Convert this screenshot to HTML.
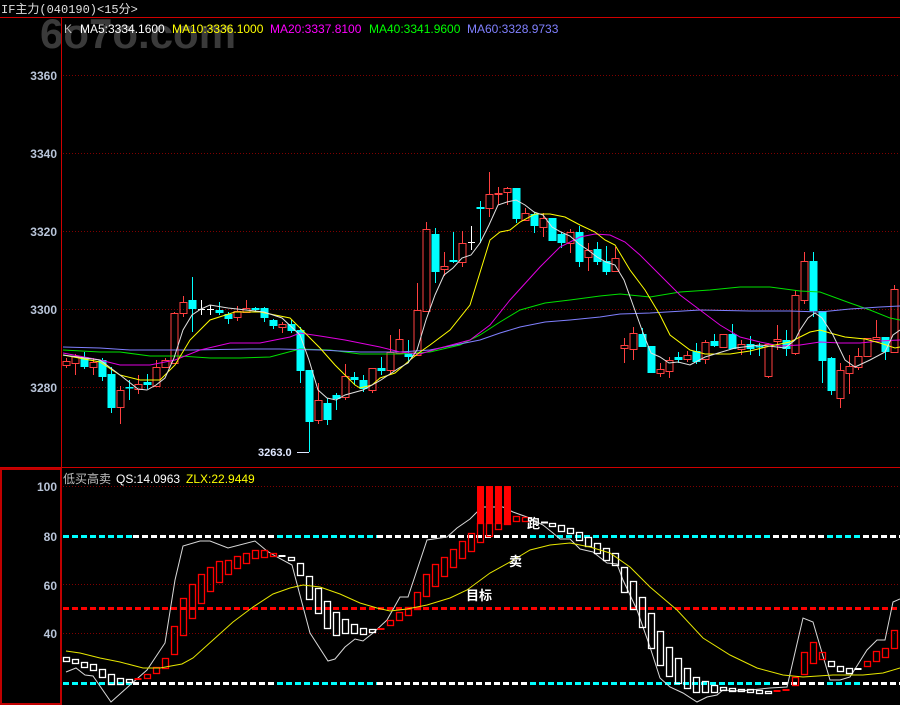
<!DOCTYPE html>
<html><head><meta charset="utf-8">
<style>
html,body{margin:0;padding:0;background:#000;width:900px;height:705px;overflow:hidden}
svg{display:block}
text{font-family:"Liberation Sans","Noto Sans CJK SC",sans-serif}
</style></head>
<body>
<svg id="s" width="900" height="705" xmlns="http://www.w3.org/2000/svg">
<rect width="900" height="705" fill="#000"/>
<text x="40" y="48" font-size="42" font-weight="bold" fill="#3a3a3a">6o7o.com</text>
<text x="1" y="13" font-size="12" fill="#e0e0e0" style="font-family:'Liberation Mono','Noto Sans CJK SC',monospace">IF主力(040190)&lt;15分&gt;</text>
<line x1="0" y1="17.5" x2="900" y2="17.5" stroke="#d00000"/>
<line x1="61.5" y1="17" x2="61.5" y2="467" stroke="#d00000"/>
<line x1="0" y1="467.5" x2="900" y2="467.5" stroke="#d00000"/>
<rect x="1" y="469" width="60" height="235" fill="none" stroke="#c00000" stroke-width="2"/>
<g font-size="12">
<text x="64" y="33" fill="#c0c0c0">K</text>
<text x="80" y="33" fill="#fff">MA5:3334.1600</text>
<text x="172" y="33" fill="#ff0">MA10:3336.1000</text>
<text x="270" y="33" fill="#f0f">MA20:3337.8100</text>
<text x="369" y="33" fill="#0f0">MA40:3341.9600</text>
<text x="467" y="33" fill="#8080ff">MA60:3328.9733</text>
<text x="63" y="483" fill="#c0c0c0">低买高卖</text>
<text x="116" y="483" fill="#fff">QS:14.0963</text>
<text x="186" y="483" fill="#ff0">ZLX:22.9449</text>
</g>
<g font-size="12" font-weight="bold" fill="#b8c4d8" text-anchor="end">
<text x="57" y="80">3360</text><text x="57" y="158">3340</text><text x="57" y="236">3320</text>
<text x="57" y="314">3300</text><text x="57" y="392">3280</text>
<text x="57" y="491">100</text><text x="57" y="541">80</text><text x="57" y="590">60</text><text x="57" y="638">40</text>
</g>
<g stroke="#800000" stroke-dasharray="1,2">
<line x1="63" y1="75.5" x2="900" y2="75.5"/><line x1="63" y1="153.5" x2="900" y2="153.5"/>
<line x1="63" y1="231.5" x2="900" y2="231.5"/><line x1="63" y1="309.5" x2="900" y2="309.5"/>
<line x1="63" y1="387.5" x2="900" y2="387.5"/>
<line x1="63" y1="486.5" x2="900" y2="486.5"/><line x1="63" y1="584.5" x2="900" y2="584.5"/>
<line x1="63" y1="633.5" x2="900" y2="633.5"/>
</g>
<g id="g"></g>
<text x="258" y="456" font-size="11" font-weight="bold" fill="#e0e8ff">3263.0</text>
<line x1="297" y1="452.5" x2="309" y2="452.5" stroke="#e0e8ff"/>
<g font-size="13" font-weight="bold" fill="#fff">
<text x="527" y="528">跑</text>
<text x="509" y="566">卖</text>
<text x="466" y="600">目标</text>
</g>
</svg>
<script>
var NS="http://www.w3.org/2000/svg",G=document.getElementById('g');
function el(t,a){var e=document.createElementNS(NS,t);for(var k in a)e.setAttribute(k,a[k]);G.appendChild(e);return e;}
function line(pts,c,w){el('polyline',{points:pts.map(p=>p.join(',')).join(' '),fill:'none',stroke:c,'stroke-width':w||1});}
function dash(y,segs){segs.forEach(s=>{el('line',{x1:s[0],y1:y,x2:s[1],y2:y,stroke:s[2],'stroke-width':3,'stroke-dasharray':'6,3'});});}
var pat=[[63,133,'#0ff'],[133,277,'#fff'],[277,377,'#0ff'],[377,530,'#fff'],[530,773,'#0ff'],[773,827,'#fff'],[827,863,'#0ff'],[863,900,'#fff']];
dash(536.5,pat);dash(683.5,pat);dash(608.5,[[63,900,'#f00']]);
var C=[[66,358,361,365,368,'r'],[75,354,356,363,375,'r'],[84,352,357,367,369,'c'],[93,358,362,367,375,'r'],[102,358,360,377,381,'c'],[111,367,374,408,413,'c'],[120,386,390,407,424,'r'],[129,380,387,388,400,'c'],[138,375,384,389,394,'r'],[147,374,382,385,389,'c'],[156,360,367,386,386,'r'],[165,358,360,367,367,'r'],[174,312,313,363,363,'r'],[183,296,302,313,317,'r'],[192,277,300,309,332,'c'],[201,300,309,309,315,'w'],[210,305,309,309,315,'w'],[219,302,310,313,315,'c'],[228,312,314,319,324,'c'],[237,306,311,317,321,'r'],[246,300,308,312,313,'r'],[255,307,308,310,311,'c'],[264,307,308,318,322,'c'],[273,319,320,326,329,'c'],[282,322,324,327,333,'r'],[291,320,324,331,333,'c'],[300,327,330,371,383,'c'],[309,370,370,422,452,'c'],[318,383,400,420,424,'r'],[327,398,403,420,425,'c'],[336,393,395,399,410,'c'],[345,364,376,397,400,'r'],[354,372,377,380,385,'c'],[363,375,380,389,392,'c'],[372,368,368,390,393,'r'],[381,357,368,371,375,'c'],[390,335,352,370,374,'r'],[399,329,339,353,353,'r'],[408,340,353,357,363,'c'],[417,283,310,355,355,'r'],[426,222,229,311,311,'r'],[435,228,234,272,283,'c'],[444,252,266,269,276,'r'],[453,232,260,262,263,'c'],[462,231,243,262,267,'r'],[471,226,242,242,250,'w'],[480,201,207,209,243,'c'],[489,172,194,208,217,'r'],[498,187,193,194,205,'r'],[507,187,188,192,205,'r'],[516,188,188,219,223,'c'],[525,208,213,220,220,'r'],[534,212,214,226,233,'c'],[543,213,218,227,237,'r'],[552,218,218,241,241,'c'],[561,232,234,243,248,'c'],[570,229,232,243,253,'r'],[579,226,232,262,267,'c'],[588,243,250,257,271,'r'],[597,242,249,262,265,'c'],[606,246,261,272,275,'c'],[615,247,258,271,272,'r'],[624,338,345,348,363,'r'],[633,327,333,349,360,'r'],[642,328,334,347,347,'c'],[651,346,346,373,373,'c'],[660,363,369,373,377,'r'],[669,357,360,371,378,'r'],[678,352,357,360,363,'c'],[687,351,355,359,362,'r'],[696,343,351,362,364,'c'],[705,340,342,359,364,'r'],[714,334,341,346,347,'c'],[723,334,334,347,347,'r'],[732,324,334,349,349,'c'],[741,340,344,349,355,'r'],[750,336,344,349,355,'c'],[759,343,346,347,356,'c'],[768,343,344,376,378,'r'],[777,325,339,341,350,'r'],[786,330,340,349,356,'c'],[795,290,295,353,355,'r'],[804,252,261,300,304,'r'],[813,252,261,311,317,'c'],[822,311,311,361,383,'c'],[831,357,358,391,395,'c'],[840,363,370,398,408,'r'],[849,355,366,373,394,'r'],[858,348,356,367,370,'r'],[867,338,338,356,356,'r'],[876,320,337,339,340,'r'],[885,337,337,352,360,'c'],[894,285,289,352,353,'r']];
C.forEach(function(d){var x=d[0],c=d[5];
 var col=c=='r'?'#ff4040':c=='c'?'#00ffff':'#fff';
 if(c=='w'){el('line',{x1:x+.5,y1:d[1],x2:x+.5,y2:d[4],stroke:col});el('line',{x1:x-3,y1:d[2]+.5,x2:x+4,y2:d[2]+.5,stroke:col});return;}
 if(c=='r'){el('line',{x1:x+.5,y1:d[1],x2:x+.5,y2:d[2],stroke:col});el('line',{x1:x+.5,y1:d[3],x2:x+.5,y2:d[4],stroke:col});
  el('rect',{x:x-3,y:d[2]+.5,width:7,height:Math.max(1,d[3]-d[2]),fill:'none',stroke:col});}
 else{el('line',{x1:x+.5,y1:d[1],x2:x+.5,y2:d[4],stroke:col});el('rect',{x:x-3.5,y:d[2],width:8,height:Math.max(1.5,d[3]-d[2]),fill:col});}
});
line([[63,350],[100,352],[120,352],[150,356],[180,356],[210,358],[240,358],[270,357],[300,349],[330,350],[360,354],[400,354],[430,352],[460,345],[480,335],[500,322],[520,310],[545,303],[570,300],[600,296],[620,294],[650,297],[680,292],[710,290],[740,287],[770,287],[800,291],[820,292],[850,303],[870,310],[890,318],[900,320]],'#00e000');
line([[63,347],[100,348],[130,350],[190,350],[250,349],[280,349],[320,350],[360,352],[400,352],[430,350],[460,344],[480,340],[500,333],[520,327],[545,322],[570,320],[600,317],[620,314],[650,313],[700,310],[750,311],[790,311],[820,312],[850,309],[880,307],[900,306]],'#8080ff');
line([[63,353],[100,360],[120,365],[150,365],[175,360],[200,350],[230,343],[260,343],[290,337],[300,333],[320,336],[345,340],[380,347],[400,352],[420,354],[440,348],[470,340],[490,325],[510,300],[540,267],[560,247],[580,237],[595,234],[610,235],[625,242],[640,255],[660,275],[680,295],[700,310],[720,325],[740,337],[760,342],[780,346],[800,345],[820,342],[840,343],[860,343],[880,341],[900,340]],'#e000e0');
line([[63,355],[100,362],[120,375],[140,380],[160,380],[175,365],[190,340],[210,320],[235,312],[260,312],[290,318],[300,328],[320,348],[335,365],[355,385],[360,388],[372,385],[380,378],[395,373],[410,360],[420,352],[430,345],[450,330],[470,305],[490,240],[500,232],[510,230],[520,222],[535,214],[550,214],[565,217],[580,225],[595,232],[605,240],[615,245],[630,270],[645,290],[660,315],[670,335],[690,350],[705,354],[730,354],[750,351],[770,346],[790,342],[810,332],[820,330],[830,333],[845,337],[865,339],[880,343],[895,348],[900,347]],'#ffff00');
line([[63,355],[100,360],[120,375],[138,389],[147,390],[156,385],[165,378],[174,358],[183,330],[192,315],[201,309],[210,305],[228,308],[246,310],[264,312],[282,318],[300,335],[309,360],[318,390],[327,398],[336,400],[345,395],[363,390],[381,380],[399,368],[408,363],[417,350],[426,320],[435,295],[444,275],[453,268],[462,258],[471,255],[480,243],[489,225],[498,205],[507,202],[516,200],[525,205],[534,212],[543,215],[552,227],[561,232],[570,236],[579,244],[588,250],[597,257],[606,262],[615,265],[624,280],[633,305],[642,330],[651,353],[660,357],[669,363],[678,362],[690,365],[705,357],[735,348],[760,345],[785,348],[795,340],[800,330],[808,318],[815,313],[822,318],[833,335],[845,360],[855,367],[870,360],[885,352],[893,335],[900,330]],'#e0e0e0');
var L=[[66,657,661,'w'],[75,659,663,'w'],[84,662,667,'w'],[93,664,670,'w'],[102,669,677,'w'],[111,674,684,'w'],[120,678,684,'w'],[129,679,682,'w'],[138,678,679,'R'],[147,674,678,'r'],[156,667,673,'r'],[165,658,668,'r'],[174,626,654,'r'],[183,598,635,'r'],[192,584,618,'r'],[201,574,603,'r'],[210,567,591,'r'],[219,561,582,'r'],[228,560,574,'r'],[237,556,568,'r'],[246,553,563,'r'],[255,550,558,'r'],[264,550,557,'r'],[273,553,556,'r'],[282,555,557,'W'],[291,557,560,'w'],[300,563,575,'w'],[309,576,599,'w'],[318,588,613,'w'],[327,601,628,'w'],[336,612,635,'w'],[345,619,633,'w'],[354,624,633,'w'],[363,628,634,'w'],[372,629,632,'w'],[381,628,629,'R'],[390,620,625,'r'],[399,612,620,'r'],[408,607,615,'r'],[417,592,609,'r'],[426,574,596,'r'],[435,564,586,'r'],[444,557,576,'r'],[453,549,567,'r'],[462,541,558,'r'],[471,533,551,'r'],[480,523,542,'r'],[489,523,536,'r'],[498,523,529,'r'],[507,523,524,'r'],[516,516,521,'r'],[525,517,521,'r'],[552,523,526,'w'],[561,525,531,'w'],[570,528,533,'w'],[579,532,540,'w'],[588,537,546,'w'],[597,543,553,'w'],[606,548,560,'w'],[615,553,565,'w'],[624,567,592,'w'],[633,581,609,'w'],[642,597,627,'w'],[651,613,648,'w'],[660,631,665,'w'],[669,647,676,'w'],[678,658,683,'w'],[687,668,688,'w'],[696,677,692,'w'],[705,681,692,'w'],[714,685,692,'w'],[723,687,690,'w'],[732,688,691,'w'],[741,689,691,'w'],[750,689,692,'w'],[759,690,693,'w'],[768,691,693,'w'],[777,690,691,'R'],[786,689,690,'R'],[795,677,685,'r'],[804,652,674,'r'],[813,642,663,'r'],[822,652,659,'r'],[831,661,666,'w'],[840,666,671,'w'],[849,668,673,'w'],[858,668,669,'W'],[867,661,666,'r'],[876,651,661,'r'],[885,648,657,'r'],[894,630,648,'r']];
line([[66,672],[76,668],[85,675],[93,676],[111,702],[130,685],[147,670],[165,643],[175,580],[183,546],[200,541],[210,541],[228,548],[255,541],[267,551],[277,557],[292,565],[310,633],[328,661],[335,659],[345,647],[355,639],[363,641],[373,633],[387,620],[400,597],[408,597],[427,540],[447,537],[457,528],[470,519],[477,512],[483,507],[503,507],[513,512],[527,517],[543,525],[553,533],[560,539],[570,539],[580,549],[593,552],[607,563],[617,564],[623,580],[637,610],[650,647],[660,678],[670,687],[683,693],[697,702],[707,697],[717,695],[723,690],[740,691],[770,688],[787,687],[803,618],[813,622],[830,680],[840,680],[850,677],[867,650],[877,640],[885,640],[893,602],[900,599]],'#d8d8d8');
[480,489,498,507].forEach(function(x){el('rect',{x:x-3,y:486,width:7,height:37,fill:'#ff0000'});});
el('line',{x1:541,y1:522.5,x2:548,y2:522.5,stroke:'#fff','stroke-width':2});
L.forEach(function(d){var x=d[0],t=d[3],col=(t=='r'||t=='R')?'#ff0000':'#fff';
 if(t=='R'||t=='W'){el('rect',{x:x-3.5,y:d[1],width:7,height:Math.max(2,d[2]-d[1]),fill:col});}
 else el('rect',{x:x-2.5,y:d[1]+.5,width:6,height:Math.max(1,d[2]-d[1]),fill:'none',stroke:col,'stroke-width':1.3});
});
line([[66,651],[80,653],[100,658],[120,662],[143,668],[160,668],[182,664],[193,658],[213,640],[233,622],[253,607],[273,594],[290,588],[303,585],[320,587],[340,594],[360,603],[377,608],[390,611],[407,609],[427,605],[450,598],[467,590],[490,573],[510,562],[530,550],[550,545],[570,543],[590,547],[610,553],[630,567],[650,587],[677,610],[703,638],[730,655],[757,668],[783,675],[803,677],[833,675],[863,675],[883,673],[900,668]],'#e6e600');
</script>
</body></html>
